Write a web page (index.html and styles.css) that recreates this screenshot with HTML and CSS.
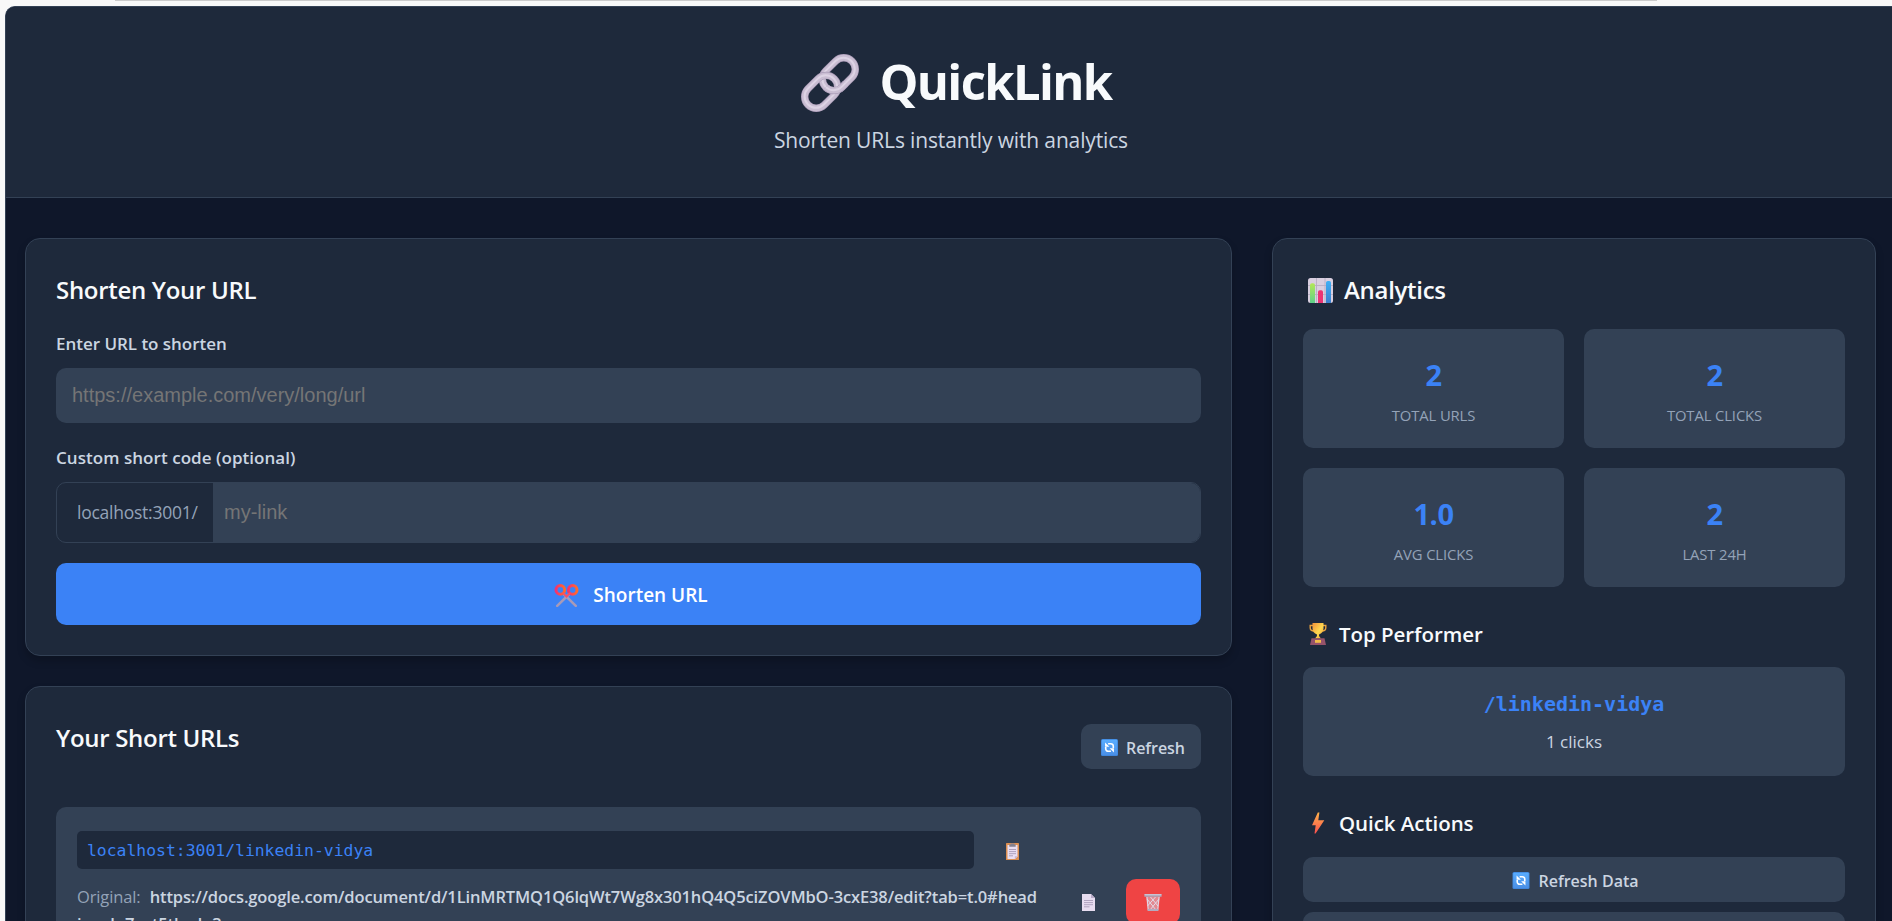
FILE: index.html
```html
<!DOCTYPE html>
<html lang="en">
<head>
<meta charset="utf-8">
<title>QuickLink</title>
<link rel="stylesheet" href="styles.css">
</head>
<body>
<svg class="defs" width="0" height="0" aria-hidden="true">
  <defs>
    <linearGradient id="ring" x1="0" y1="0" x2="1" y2="0"><stop offset="0" stop-color="#f5326f"/><stop offset="1" stop-color="#ff6a2c"/></linearGradient>
    <linearGradient id="gold" x1="0" y1="0" x2="1" y2="1"><stop offset="0" stop-color="#f0903a"/><stop offset=".55" stop-color="#ffd84f"/><stop offset="1" stop-color="#e89a38"/></linearGradient>
    <linearGradient id="bolt" x1="0" y1="0" x2="0" y2="1"><stop offset="0" stop-color="#ffb24a"/><stop offset="1" stop-color="#f8504e"/></linearGradient>
    <linearGradient id="green" x1="0" y1="0" x2="0" y2="1"><stop offset="0" stop-color="#b4e857"/><stop offset="1" stop-color="#5fd08a"/></linearGradient>
    <linearGradient id="sky" x1="0" y1="0" x2="0" y2="1"><stop offset="0" stop-color="#3fb0f5"/><stop offset="1" stop-color="#3b7fcf"/></linearGradient>
    <linearGradient id="tile" x1="0" y1="0" x2="0" y2="1"><stop offset="0" stop-color="#59adff"/><stop offset="1" stop-color="#4a8fe6"/></linearGradient>
    <symbol id="i-refresh" viewBox="0 0 18 18">
      <rect width="18" height="18" rx="1.6" fill="#3f86dc"/>
      <rect x=".8" y=".8" width="16.4" height="16.2" rx="1" fill="url(#tile)"/>
      <g fill="none" stroke="#fff" stroke-width="1.7"><path d="M7.500 5h2.900A2.600 2.600 0 0 1 13 7.600V9.500"/><path d="M10.500 13H7.600A2.600 2.600 0 0 1 5 10.400V8.500"/></g>
      <path d="M4.300 3.700v4.600h4.600zM13.700 14.300V9.700H9.100z" fill="#fff"/>
    </symbol>
  </defs>
</svg>
<div class="topline"></div>
<div class="app">
  <header class="header">
    <div class="brand">
      <svg class="brand-icon" viewBox="0 0 60 60" fill="none">
        <g transform="rotate(-45 30 30)">
          <rect x="24" y="18.500" width="37" height="23" rx="11.500" stroke="#a99bb6" stroke-width="7.400"/>
          <rect x="24" y="18.500" width="37" height="23" rx="11.500" stroke="#c9bdd2" stroke-width="6"/>
          <rect x="24.200" y="18.300" width="36.600" height="22.600" rx="11.300" stroke="#ddd3e4" stroke-width="2"/>
          <rect x="-1" y="18.500" width="37" height="23" rx="11.500" stroke="#a99bb6" stroke-width="7.400"/>
          <rect x="-1" y="18.500" width="37" height="23" rx="11.500" stroke="#c9bdd2" stroke-width="6"/>
          <rect x="-.800" y="18.300" width="36.600" height="22.600" rx="11.300" stroke="#ddd3e4" stroke-width="2"/>
          <path d="M24 31v-1a11.500 11.500 0 0 0 11.500 11.500h5" stroke="#a99bb6" stroke-width="7.400"/>
          <path d="M24 30v0a11.500 11.500 0 0 0 11.500 11.500h6" stroke="#c9bdd2" stroke-width="6"/>
          <path d="M24.200 30a11.300 11.300 0 0 0 11.300 11h6" stroke="#ddd3e4" stroke-width="2"/>
        </g>
      </svg>
      <h1 class="brand-name">QuickLink</h1>
    </div>
    <p class="tagline">Shorten URLs instantly with analytics</p>
  </header>

  <main class="main">
    <div class="column">
      <section class="card form-card">
        <h2 class="title">Shorten Your URL</h2>
        <label class="label" for="url">Enter URL to shorten</label>
        <input class="input" id="url" type="text" placeholder="https://example.com/very/long/url">
        <label class="label" for="code">Custom short code (optional)</label>
        <div class="group">
          <span class="prefix">localhost:3001/</span>
          <input class="group-input" id="code" type="text" placeholder="my-link">
        </div>
        <button class="primary">
          <svg class="scissors" viewBox="0 0 25 23">
            <path d="M3.200 21.800L15.800 9.500M21.800 21.800L9.200 9.500" stroke="#a89ab8" stroke-width="2.500" stroke-linecap="round"/>
            <circle cx="6.300" cy="5.900" r="4.300" fill="none" stroke="url(#ring)" stroke-width="3"/>
            <circle cx="18.700" cy="5.900" r="4.300" fill="none" stroke="url(#ring)" stroke-width="3"/>
            <path d="M9 9l3.500 3.500L16 9" fill="none" stroke="#f4506a" stroke-width="2"/>
          </svg>
          <span>Shorten URL</span>
        </button>
      </section>

      <section class="card list-card">
        <div class="list-head">
          <h2 class="title">Your Short URLs</h2>
          <button class="secondary refresh"><svg class="tile" width="17" height="17"><use href="#i-refresh"/></svg><span>Refresh</span></button>
        </div>
        <article class="item">
          <div class="item-body">
            <div class="short-row">
              <code class="short">localhost:3001/linkedin-vidya</code>
              <svg class="doc" viewBox="0 0 13 17">
                <rect width="13" height="17" rx=".6" fill="#dc8f52"/><path d="M1.500 2h10v11.500L9 16H1.500z" fill="#e9def2"/><path d="M11.500 13.300H8.800V16z" fill="#c3b3d3"/>
                <path d="M4.500.5h4v1h1.200v2.300H3.300V1.500h1.200z" fill="#84808e"/><path d="M3 6.500h7M3 8.600h7M3 10.700h7M3 12.800h4" stroke="#9d91ad" stroke-width=".8"/>
              </svg>
            </div>
            <p class="original">Original: <strong class="original-url">https://docs.google.com/document/d/1LinMRTMQ1Q6lqWt7Wg8x301hQ4Q5ciZOVMbO-3cxE38/edit?tab=t.0#head<br>ing=h.7gyt5tbsdp3</strong></p>
          </div>
          <div class="actions">
            <svg class="doc" viewBox="0 0 13 17">
              <path d="M0 0h9l4 4v13H0z" fill="#e7dcf0"/><path d="M9 0v4h4z" fill="#b9abc8"/><path d="M2 6.500h9M2 8.600h9M2 10.700h9M2 12.800h5.500" stroke="#a294b3" stroke-width=".8"/>
            </svg>
            <button class="danger">
              <svg class="trash" viewBox="0 0 18 17">
                <path d="M2 2.500h14L14.300 16.500H3.700z" fill="#d8cede" fill-opacity=".5"/>
                <path d="M3 3l1.300 13M15 3l-1.300 13M3 5l9 11M6.500 3l7.500 9M11.500 3l-8 9M15 5L6 16" stroke="#e2dae8" stroke-width="1" fill="none"/>
                <path d="M.4 0h17.200v2.800H.4z" fill="#aca4b6"/><path d="M.6.4h16.800v.8H.6z" fill="#ded7e4"/><path d="M3.600 14.900h10.800V17H3.600z" fill="#b3abc0"/>
              </svg>
            </button>
          </div>
        </article>
      </section>
    </div>

    <aside class="card side">
      <h2 class="title side-title">
        <svg class="chart" viewBox="0 0 25 25">
          <rect width="25" height="25" rx="2.500" fill="#d9cfe0"/><path d="M0 7.500h25M0 16.500h25M8.500 0v25M17 0v25" stroke="#b9aec4" stroke-width=".9"/>
          <path d="M2 25V7.200a2 2 0 0 1 2-2h1a2 2 0 0 1 2 2V25z" fill="url(#green)"/><path d="M10 25V14a1.800 1.800 0 0 1 1.800-1.800h1.400A1.800 1.800 0 0 1 15 14v11z" fill="#ec3474"/><path d="M18 25V4.800A1.800 1.800 0 0 1 19.800 3h1.400A1.800 1.800 0 0 1 23 4.800V25z" fill="url(#sky)"/>
        </svg>
        <span>Analytics</span>
      </h2>
      <div class="stats">
        <div class="stat"><div class="stat-number">2</div><div class="stat-label">Total URLs</div></div>
        <div class="stat"><div class="stat-number">2</div><div class="stat-label">Total Clicks</div></div>
        <div class="stat"><div class="stat-number">1.0</div><div class="stat-label">Avg Clicks</div></div>
        <div class="stat"><div class="stat-number">2</div><div class="stat-label">Last 24h</div></div>
      </div>
      <h3 class="subtitle">
        <svg class="sub-icon" viewBox="0 0 18 22">
          <path d="M4 2.500H1.200v2.300c0 2 1.600 3.200 4 3.200M14 2.500h2.800v2.300c0 2-1.600 3.200-4 3.200" fill="none" stroke="#e9a23f" stroke-width="1.400"/>
          <path d="M3.500 0h11v5.500c0 3-1.900 5-4.300 5.800L10 13l2 2.500H6L8 13l-.2-1.700C5.400 10.500 3.500 8.500 3.500 5.500z" fill="url(#gold)"/>
          <path d="M2.500 15.200h13L17 22H1z" fill="#96536a"/><rect x="6" y="17" width="6" height="2.800" fill="#f3bd4a"/>
        </svg>
        <span>Top Performer</span>
      </h3>
      <div class="top">
        <div class="slug">/linkedin-vidya</div>
        <div class="clicks">1 clicks</div>
      </div>
      <h3 class="subtitle">
        <svg class="sub-icon" viewBox="0 0 18 22"><path d="M8.800.5h1.600L9.300 8.200h6L6.600 21.500H5.500l1.200-8.300H3z" fill="url(#bolt)"/></svg>
        <span>Quick Actions</span>
      </h3>
      <button class="secondary wide"><svg class="tile" width="18" height="17"><use href="#i-refresh"/></svg><span>Refresh Data</span></button>
      <button class="secondary wide next"></button>
    </aside>
  </main>
</div>
</body>
</html>
```
FILE: styles.css
```css
* { box-sizing: border-box; margin: 0; }
body {
  height: 921px;
  overflow: hidden;
  padding: 0 0 0 5px;
  background: #f8f8f8;
  color: #f8fafc;
  font-family: "Open Sans", "Noto Sans", sans-serif;
}
button, input { font-family: inherit; border: 0; padding: 0; }
.defs { position: absolute; }
.topline { height: 1px; margin: 0 235px 5px 110px; background: #cbcbcb; }
.app {
  height: 915px;
  border: solid #334155;
  border-width: 1px 0 0 1px;
  border-top-left-radius: 10px;
  background: #0f172a;
  overflow: hidden;
}
.header {
  height: 191px;
  padding: 44px 0 0 4px;
  background: #1e293b;
  border-bottom: 1px solid #334155;
  text-align: center;
}
.brand { display: flex; justify-content: center; align-items: center; height: 60px; padding-left: 10px; }
.brand-icon { width: 60px; height: 60px; margin: 3px 19px 0 0; }
.brand-name { font-size: 49px; line-height: 60px; font-weight: 800; letter-spacing: -2.1px; font-weight: 700; letter-spacing: -1.65px; }
.tagline { margin-top: 14px; font-size: 21px; line-height: 30px; letter-spacing: -.14px; color: #cbd5e1; }

.main {
  display: grid;
  grid-template-columns: 1207px 604px;
  gap: 40px;
  align-items: start;
  padding: 40px 16px 0 19px;
}
.column { display: flex; flex-direction: column; gap: 30px; }
.card {
  padding: 35px 30px 30px;
  background: #1e293b;
  border: 1px solid #334155;
  border-radius: 15px;
  box-shadow: 0 5px 8px rgba(0, 0, 0, .2);
}
.title { font-size: 24px; line-height: 32px; font-weight: 600; letter-spacing: -.3px; }
.form-card { display: flex; flex-direction: column; }
.label { font-size: 17px; line-height: 24px; font-weight: 600; letter-spacing: -.03px; color: #cbd5e1; margin: 26px 0 12px; }
.input {
  height: 55px;
  padding: 0 16px;
  background: #334155;
  border-radius: 10px;
  font: 20px "Liberation Sans", Arial, sans-serif;
}
.input + .label { margin-top: 23px; letter-spacing: .05px; }
input::placeholder { color: #757575; opacity: 1; }
.group { display: flex; height: 61px; border: 1px solid #334155; border-radius: 10px; overflow: hidden; }
.prefix {
  width: 156px;
  padding-left: 20px;
  font-size: 17.5px;
  line-height: 59px;
  letter-spacing: -.25px;
  color: #94a3b8;
}
.group-input { flex: 1; padding: 0 11px; background: #334155; font: 20px "Liberation Sans", Arial, sans-serif; }
.primary {
  display: flex;
  align-items: center;
  justify-content: center;
  gap: 14px;
  height: 62px;
  margin-top: 20px;
  padding: 2px 0 0 5px;
  border-radius: 10px;
  background: #3b82f6;
  color: #fff;
  font-size: 19px;
  font-weight: 600;
}
.scissors { width: 25px; height: 23px; }

.list-card { height: 400px; }
.list-head { display: flex; justify-content: space-between; align-items: flex-start; height: 47px; margin-bottom: 38px; }
.secondary {
  display: flex;
  align-items: center;
  justify-content: center;
  gap: 8px;
  height: 45px;
  border-radius: 10px;
  background: #334155;
  color: #cbd5e1;
  font-size: 16px;
  font-weight: 600;
}
.secondary span { margin-top: 2px; }
.refresh { width: 120px; margin-top: 2px; padding-left: 4px; letter-spacing: -.05px; }
.tile { flex: none; margin-top: 1px; }
.item { display: flex; padding: 24px 21px; background: #334155; border-radius: 10px; height: 190px; }
.item-body { width: 1005px; flex: none; }
.short-row { display: flex; align-items: center; gap: 32px; }
.short {
  width: 897px;
  height: 38px;
  padding-left: 10px;
  background: #1e293b;
  border-radius: 5px;
  color: #3b82f6;
  font: 16.4px/39px "DejaVu Sans Mono", monospace;
}
.doc { width: 13px; height: 17px; flex: none; }
.short-row .doc { margin-top: 3px; }
.original { margin-top: 14px; font-size: 16.5px; line-height: 27px; letter-spacing: -.13px; color: #94a3b8; white-space: nowrap; }
.original-url { font-weight: 600; color: #cbd5e1; margin-left: 5px; }
.actions { display: flex; align-items: center; gap: 31px; height: 45px; margin-top: 48px; }
.actions .doc { margin-top: 2px; }
.danger { display: flex; align-items: center; justify-content: center; width: 54px; height: 45px; border-radius: 10px; background: #ef4444; }
.trash { width: 18px; height: 17px; margin-top: 2px; }

.side { height: 900px; }
.side-title { display: flex; align-items: center; gap: 11px; padding-left: 5px; }
.chart { width: 25px; height: 25px; }
.stats { display: grid; grid-template-columns: 1fr 1fr; gap: 20px; margin: 23px 0 33px; }
.stat { height: 119px; padding-top: 26px; background: #334155; border-radius: 10px; text-align: center; }
.stat-number { font-size: 29px; line-height: 40px; font-weight: 700; letter-spacing: -.4px; color: #3b82f6; }
.stat-label { margin-top: 8px; font-size: 14.8px; line-height: 24px; letter-spacing: -.1px; text-transform: uppercase; color: #94a3b8; }
.subtitle { display: flex; align-items: center; gap: 12px; padding-left: 6px; font-size: 20.5px; line-height: 28px; font-weight: 600; letter-spacing: -.05px; }
.sub-icon { width: 18px; height: 22px; }
.top { height: 109px; margin: 19px 0 33px; padding-top: 23px; background: #334155; border-radius: 10px; text-align: center; }
.slug { font: 700 20px/28px "DejaVu Sans Mono", monospace; color: #3b82f6; }
.clicks { margin-top: 12px; font-size: 17px; line-height: 24px; color: #cbd5e1; }
.wide { width: 100%; margin-top: 20px; padding-left: 3px; }
.next { margin-top: 10px; }
```
